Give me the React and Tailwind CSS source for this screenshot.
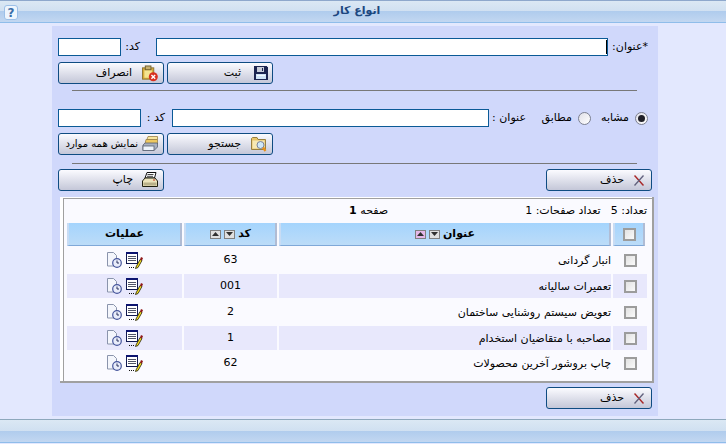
const IconSave = () => (
  <svg width="14" height="14" viewBox="0 0 14 14" shapeRendering="crispEdges">
    <rect x="0" y="0" width="14" height="14" fill="#1c2450" />
    <rect x="3" y="1" width="7" height="5" fill="#c8ccd8" />
    <rect x="8" y="2" width="1" height="3" fill="#1c2450" />
    <rect x="2" y="8" width="10" height="5" fill="#cfe2f6" />
    <rect x="3" y="9" width="8" height="1" fill="#f4f8fc" />
    <rect x="13" y="0" width="1" height="1" fill="#d8daea" />
  </svg>
);
const IconCancel = () => (
  <svg width="17" height="17" viewBox="0 0 17 17">
    <rect x="0.500" y="2.500" width="12" height="12" fill="#d8ac38" stroke="#8c7430" />
    <rect x="2.500" y="5" width="8" height="8" fill="#f4e490" />
    <rect x="3.500" y="0.500" width="6" height="4" fill="#c8b070" stroke="#706030" />
    <circle cx="12" cy="12" r="4.800" fill="#d83020" />
    <path d="M10 10l4 4M14 10l-4 4" stroke="#fff" strokeWidth="1.500" />
  </svg>
);
const IconFind = () => (
  <svg width="16" height="16" viewBox="0 0 16 16">
    <path d="M0.500 2.500V13.500H14.500V3.500H7L6 1.500H1.500Z" fill="#e8c468" stroke="#988040" />
    <rect x="1.500" y="4.500" width="12" height="8" fill="#f6e8b4" />
    <circle cx="9.500" cy="9" r="3.500" fill="#cfe8f8" stroke="#788098" strokeWidth="1" />
    <path d="M12 11.500L14.500 15" stroke="#e89018" strokeWidth="2.200" />
  </svg>
);
const IconAll = () => (
  <svg width="16" height="16" viewBox="0 0 16 16">
    <path d="M6 0.500H15.500V3.500H5Z" fill="#f8e6a0" stroke="#98804a" strokeWidth="0.800" />
    <path d="M4 3.500H15.500V8H3Z" fill="#eec860" stroke="#98804a" strokeWidth="0.800" />
    <path d="M1 9L3 7H15.500V11L12 14.500H1Z" fill="#a8b0c0" stroke="#586070" strokeWidth="0.800" />
    <rect x="1" y="10" width="11" height="4.500" fill="#eef4fc" stroke="#586070" strokeWidth="0.800" />
  </svg>
);
const IconPrint = () => (
  <svg width="16" height="16" viewBox="0 0 16 16">
    <path d="M5 0.500H14L12.500 6H3Z" fill="#fff" stroke="#101010" />
    <path d="M5.500 2.500H11.500M5 4.300H11" stroke="#303030" strokeWidth="0.900" />
    <path d="M0.500 9L3 6H13L15.500 9V14.500H0.500Z" fill="#ece4bc" stroke="#202010" />
    <rect x="1.500" y="10.500" width="13" height="3" fill="#b8b088" />
    <rect x="11" y="7.500" width="2" height="1" fill="#c83020" />
  </svg>
);
const IconX = () => (
  <svg width="10" height="11" viewBox="0 0 10 11">
    <path d="M0.500 0.500L9.500 10.500" stroke="#a82828" strokeWidth="1.500" />
    <path d="M9.500 0.500L0.500 10.500" stroke="#60607c" strokeWidth="1.300" />
  </svg>
);
const IconHistory = () => (
  <svg width="15" height="16" viewBox="0 0 15 16">
    <path d="M0.500 0.500H6.500L9.500 3.500V14H0.500Z" fill="#f4f6fc" stroke="#8a94ac" />
    <circle cx="10" cy="11" r="4.300" fill="#e8ecfa" stroke="#46569c" strokeWidth="1.200" />
    <path d="M10 8.500V11H12" stroke="#28305c" strokeWidth="1" fill="none" />
  </svg>
);
const IconEdit = () => (
  <svg width="17" height="17" viewBox="0 0 17 17" shapeRendering="crispEdges">
    <rect x="0.500" y="0.500" width="11" height="11" fill="#fff" stroke="#101850" />
    <rect x="0" y="0" width="12" height="2" fill="#0c1470" />
    <path d="M2 4.500H10M2 6.500H10M2 8.500H10" stroke="#505468" />
    <path d="M3 15.500h1M5 15.500h1M7 15.500h1" stroke="#101010" />
    <path d="M10 15L14 7.500L16 8.500L12 15.500L9.500 16.500Z" fill="#f8e020" stroke="#202008" shapeRendering="auto" strokeWidth="0.800" />
    <path d="M14 7.500L15 5L17 6L16 8.500Z" fill="#901818" shapeRendering="auto" />
  </svg>
);

const Btn = ({ icon, label, wrap = "mr-[5px] w-[16px]", gap = "mr-[10px]" }) => (
  <button className="flex h-[22px] w-[106px] items-center rounded-[3px] border border-[#0f4c82] bg-gradient-to-b from-[#fbfbff] to-[#c4c7d8] text-[11px] text-black">
    <span className={`flex justify-center ${wrap}`}>{icon}</span>
    <span className={`whitespace-nowrap ${gap}`}>{label}</span>
  </button>
);

const Input = ({ className, caret }) => (
  <div className={`relative h-[18px] border border-[#0b5a96] bg-white ${className}`}>
    {caret && <span className="absolute right-[0px] top-[1px] h-[14px] w-[1px] bg-black" />}
  </div>
);

const Radio = ({ on }) => (
  <span className="flex h-[13px] w-[13px] items-center justify-center rounded-full border border-[#7c8090] bg-gradient-to-br from-[#e0e0e8] to-white">
    {on && <span className="h-[7px] w-[7px] rounded-full bg-[#202028]" />}
  </span>
);

const Check = () => (
  <span className="block h-[13px] w-[13px] border-2 border-[#9c9c9c] bg-gradient-to-br from-[#e2e2e2] to-[#fafafa]" />
);

const Sort = ({ up, active }) => (
  <span className={`flex h-[9px] w-[11px] items-center justify-center border border-[#808080] ${active ? "bg-[#e4b8e8]" : "bg-[#e0e0e0]"}`}>
    <svg width="7" height="4" viewBox="0 0 7 4">
      <path d={up ? "M3.500 0L7 4H0Z" : "M0 0H7L3.500 4Z"} fill="#303030" />
    </svg>
  </span>
);

const Hr = () => <div className="ml-[14px] mr-[15px] h-[1px] bg-[#787878]" />;

const Head = ({ children, className = "" }) => (
  <div className={`flex h-[23px] items-center justify-center gap-[3px] border-b border-b-[#7fa8d8] border-l-2 border-r-2 border-l-[#c8dcf4] border-r-[#b0bcd4] bg-gradient-to-b from-[#a4d4fd] to-[#bcdcf8] text-[11px] font-bold text-black ${className}`}>
    {children}
  </div>
);

const rows = [
  ["انبار گردانی", "63"],
  ["تعمیرات سالیانه", "001"],
  ["تعویض سیستم روشنایی ساختمان", "2"],
  ["مصاحبه با متقاضیان استخدام", "1"],
  ["چاپ بروشور آخرین محصولات", "62"],
];
const heights = ["h-[28px]", "h-[24px]", "h-[28px]", "h-[24px]", "h-[26px]"];

export default function App() {
  return (
    <div className="flex h-[444px] w-[726px] flex-col overflow-hidden bg-[#e3e8fe] font-['DejaVu_Sans',sans-serif] text-[11px] text-black">
      <header className="relative flex h-[23px] items-center justify-center border-t border-b border-t-[#8ea8cc] border-b-[#8fbdea] bg-[linear-gradient(to_bottom,#dbe8f4_0%,#d0e0f1_50%,#b0cced_50%,#c2d7f1_100%)] pr-[12px]">
        <span dir="rtl" className="font-bold text-[#1c477f]">انواع کار</span>
        <span className="absolute left-[4px] top-[4px] flex h-[15px] w-[14px] items-center justify-center rounded-[3px] border border-[#9cc0e8] bg-[#eef5fd] font-bold text-[12px] text-[#3a6ea8]">?</span>
      </header>

      <main dir="rtl" className="ml-[52px] mt-[3px] h-[390px] w-[606px] bg-[#d0d8fb] px-[6px] pt-[12px]">
        <div className="flex h-[18px] items-center">
          <span className="w-[44px] whitespace-nowrap pr-[4px]">*عنوان:</span>
          <Input className="w-[452px]" caret />
          <span className="w-[35px] whitespace-nowrap pr-[16px]">کد:</span>
          <Input className="w-[63px]" />
        </div>
        <div className="mt-[6px] flex justify-end gap-[3px]">
          <Btn icon={<IconSave />} label="ثبت" wrap="mr-[4px] w-[14px]" gap="mr-[13px]" />
          <Btn icon={<IconCancel />} label="انصراف" />
        </div>
        <div className="mt-[6px]"><Hr /></div>

        <div className="mt-[18px] flex h-[18px] items-center">
          <span className="mr-[4px]"><Radio on /></span>
          <span className="w-[44px] whitespace-nowrap pr-[6px]">مشابه</span>
          <Radio />
          <span className="w-[46px] whitespace-nowrap pr-[6px]">مطابق</span>
          <span className="w-[43px] whitespace-nowrap pr-[6px]">عنوان :</span>
          <Input className="w-[317px]" />
          <span className="w-[31px] whitespace-nowrap pr-[7px]">کد :</span>
          <Input className="w-[83px]" />
        </div>
        <div className="mt-[6px] flex justify-end gap-[3px]">
          <Btn icon={<IconFind />} label="جستجو" />
          <Btn icon={<IconAll />} label={<span className="text-[10px]">نمایش همه موارد</span>} gap="mr-[4px]" />
        </div>
        <div className="mt-[8px]"><Hr /></div>

        <div className="mt-[5px] flex justify-between">
          <Btn icon={<IconX />} label="حذف" wrap="mr-[7px] w-[10px]" gap="mr-[10px]" />
          <Btn icon={<IconPrint />} label="چاپ" gap="mr-[9px]" />
        </div>

        <section className="-mr-[2px] ml-[2px] mt-[6px] h-[186px] w-[594px] border-b-2 border-r-2 border-b-[#a0a0a0] border-r-[#a0a0a0] bg-white pl-[3px] pt-[1px]">
          <div className="h-[183px] border-l border-t border-[#a0a0a0] bg-[#fafaff] pl-[3px] pr-[5px]">
            <div className="flex h-[24px] items-center whitespace-nowrap">
              <span>تعداد: 5</span>
              <span className="mr-[10px]">تعداد صفحات: 1</span>
              <span className="mr-[137px]">صفحه <b>1</b></span>
            </div>
            <div className="grid grid-cols-[34px_332px_93px_115px] gap-x-[2px]">
              <Head className="mr-[2px]"><Check /></Head>
              <Head>
                <span>عنوان</span>
                <Sort />
                <Sort up active />
              </Head>
              <Head>
                <span>کد</span>
                <Sort />
                <Sort up />
              </Head>
              <Head>عملیات</Head>
              {rows.map(([title, code], i) => {
                const alt = i % 2 === 1 ? "bg-[#e8e8fc]" : "";
                const h = heights[i];
                return [
                  <div key={`c${i}`} className={`flex items-center justify-center ${h} ${alt}`}><Check /></div>,
                  <div key={`t${i}`} className={`flex items-center whitespace-nowrap pt-[2px] ${h} ${alt}`}>{title}</div>,
                  <div key={`k${i}`} className={`flex items-center justify-center pt-[1px] ${h} ${alt}`}>{code}</div>,
                  <div key={`o${i}`} className={`flex items-center justify-center gap-[4px] ${h} ${alt}`}>
                    <IconEdit />
                    <IconHistory />
                  </div>,
                ];
              })}
            </div>
          </div>
        </section>

        <div className="mt-[4px] flex justify-start">
          <Btn icon={<IconX />} label="حذف" wrap="mr-[7px] w-[10px]" gap="mr-[10px]" />
        </div>
      </main>

      <footer className="mt-[3px] h-[24px] border-t border-b border-t-[#8ea8bc] border-b-[#8fbdea] bg-[linear-gradient(to_bottom,#dbe8f4_0%,#d0e0f1_50%,#b0cced_50%,#c2d7f1_100%)]" />
    </div>
  );
}
